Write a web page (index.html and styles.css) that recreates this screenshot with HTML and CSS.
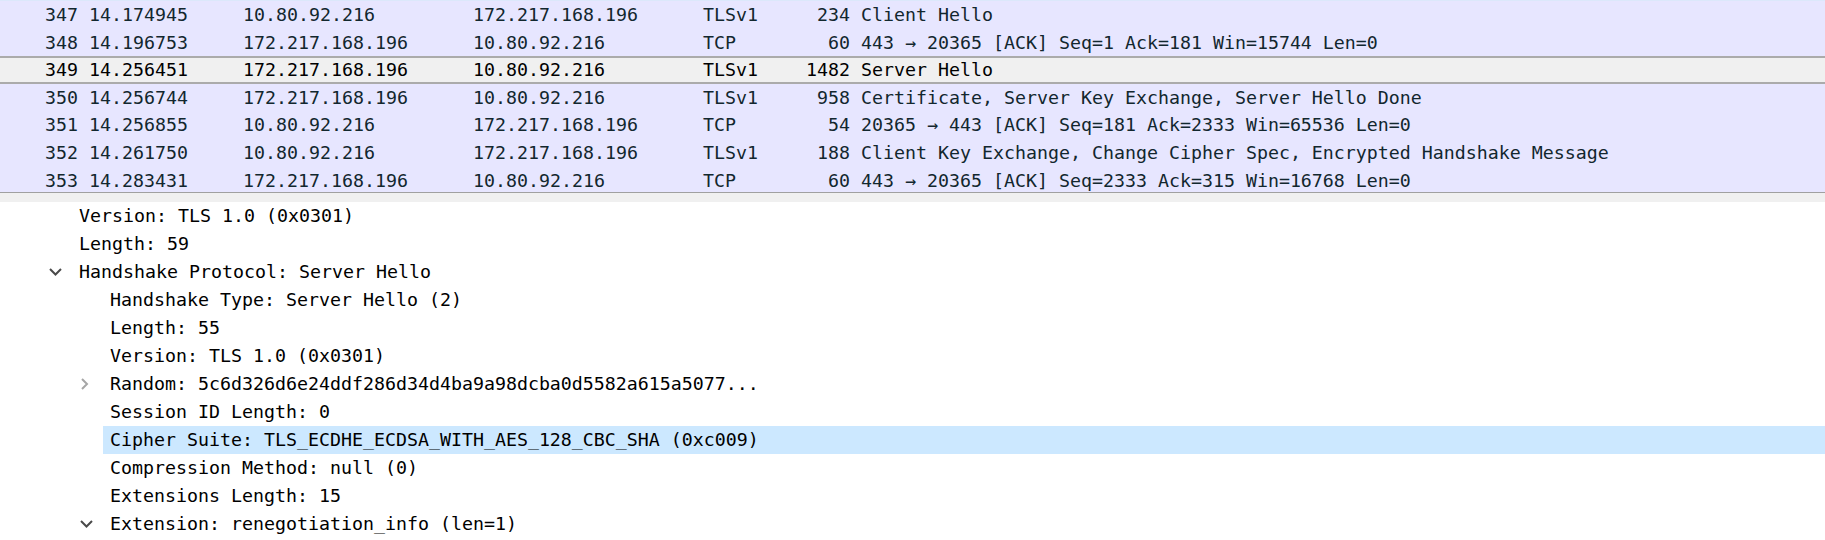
FILE: index.html
```html
<!DOCTYPE html>
<html>
<head>
<meta charset="utf-8">
<link rel="stylesheet" href="styles.css">
</head>
<body>
<div class="packets">
  <div class="prow"><span class="c-no">347</span><span class="c-time">14.174945</span><span class="c-src">10.80.92.216</span><span class="c-dst">172.217.168.196</span><span class="c-proto">TLSv1</span><span class="c-len">234</span><span class="c-info">Client Hello</span></div>
  <div class="prow"><span class="c-no">348</span><span class="c-time">14.196753</span><span class="c-src">172.217.168.196</span><span class="c-dst">10.80.92.216</span><span class="c-proto">TCP</span><span class="c-len">60</span><span class="c-info">443 → 20365 [ACK] Seq=1 Ack=181 Win=15744 Len=0</span></div>
  <div class="prow selected"><span class="c-no">349</span><span class="c-time">14.256451</span><span class="c-src">172.217.168.196</span><span class="c-dst">10.80.92.216</span><span class="c-proto">TLSv1</span><span class="c-len">1482</span><span class="c-info">Server Hello</span></div>
  <div class="prow"><span class="c-no">350</span><span class="c-time">14.256744</span><span class="c-src">172.217.168.196</span><span class="c-dst">10.80.92.216</span><span class="c-proto">TLSv1</span><span class="c-len">958</span><span class="c-info">Certificate, Server Key Exchange, Server Hello Done</span></div>
  <div class="prow"><span class="c-no">351</span><span class="c-time">14.256855</span><span class="c-src">10.80.92.216</span><span class="c-dst">172.217.168.196</span><span class="c-proto">TCP</span><span class="c-len">54</span><span class="c-info">20365 → 443 [ACK] Seq=181 Ack=2333 Win=65536 Len=0</span></div>
  <div class="prow"><span class="c-no">352</span><span class="c-time">14.261750</span><span class="c-src">10.80.92.216</span><span class="c-dst">172.217.168.196</span><span class="c-proto">TLSv1</span><span class="c-len">188</span><span class="c-info">Client Key Exchange, Change Cipher Spec, Encrypted Handshake Message</span></div>
  <div class="prow"><span class="c-no">353</span><span class="c-time">14.283431</span><span class="c-src">172.217.168.196</span><span class="c-dst">10.80.92.216</span><span class="c-proto">TCP</span><span class="c-len">60</span><span class="c-info">443 → 20365 [ACK] Seq=2333 Ack=315 Win=16768 Len=0</span></div>
</div>
<div class="splitter"></div>
<div class="details">
  <div class="trow lvl1"><span class="branch"></span><span class="label">Version: TLS 1.0 (0x0301)</span></div>
  <div class="trow lvl1"><span class="branch"></span><span class="label">Length: 59</span></div>
  <div class="trow lvl1"><span class="branch"><svg class="chev-open" width="13" height="8" viewBox="0 0 13 8"><polyline points="1,1 6.5,6.5 12,1"/></svg></span><span class="label">Handshake Protocol: Server Hello</span></div>
  <div class="trow lvl2"><span class="branch"></span><span class="label">Handshake Type: Server Hello (2)</span></div>
  <div class="trow lvl2"><span class="branch"></span><span class="label">Length: 55</span></div>
  <div class="trow lvl2"><span class="branch"></span><span class="label">Version: TLS 1.0 (0x0301)</span></div>
  <div class="trow lvl2"><span class="branch"><svg class="chev-closed" width="9" height="12" viewBox="0 0 9 12"><polyline points="2,1 7,6 2,11"/></svg></span><span class="label">Random: 5c6d326d6e24ddf286d34d4ba9a98dcba0d5582a615a5077...</span></div>
  <div class="trow lvl2"><span class="branch"></span><span class="label">Session ID Length: 0</span></div>
  <div class="trow lvl2"><span class="branch"></span><span class="label hl">Cipher Suite: TLS_ECDHE_ECDSA_WITH_AES_128_CBC_SHA (0xc009)</span></div>
  <div class="trow lvl2"><span class="branch"></span><span class="label">Compression Method: null (0)</span></div>
  <div class="trow lvl2"><span class="branch"></span><span class="label">Extensions Length: 15</span></div>
  <div class="trow lvl2"><span class="branch"><svg class="chev-open" width="13" height="8" viewBox="0 0 13 8"><polyline points="1,1 6.5,6.5 12,1"/></svg></span><span class="label">Extension: renegotiation_info (len=1)</span></div>
</div>
</body>
</html>
```
FILE: styles.css
```css
html, body {
  margin: 0;
  padding: 0;
  background: #ffffff;
}
body {
  font-family: "DejaVu Sans Mono", "Liberation Mono", monospace;
  font-size: 18.27px;
  width: 1825px;
  height: 540px;
  overflow: hidden;
}
.packets {
  height: 192px;
  overflow: hidden;
  background: #e7e6ff;
  border-top: 1px solid #dce8fb;
  border-bottom: 1px solid #a0a0a0;
  box-sizing: border-box;
  height: 193px;
}
.prow {
  display: grid;
  grid-template-columns: 89px 154px 230px 230px 92px 66px 1fr;
  height: 27.6px;
  line-height: 27.6px;
  color: #12272e;
  background: #e7e6ff;
  white-space: nowrap;
}
.prow.selected {
  background: #f0f0f0;
  color: #000000;
  box-shadow: inset 0 2px 0 #ababab, inset 0 -2px 0 #ababab;
}
.c-no {
  text-align: right;
  padding-right: 11px;
}
.c-len {
  text-align: right;
  padding-right: 11px;
}
.splitter {
  height: 9px;
  background: #f0f0f0;
}
.details {
  padding-top: 0px;
  color: #000000;
}
.trow {
  display: flex;
  align-items: stretch;
  height: 28px;
  line-height: 28px;
  white-space: nowrap;
}
.trow.lvl1 { padding-left: 48px; }
.trow.lvl2 { padding-left: 79px; }
.branch {
  flex: none;
  width: 24px;
  display: flex;
  align-items: center;
  justify-content: flex-start;
}
.branch svg { display: block; margin-left: 1px; }
.chev-open polyline {
  fill: none;
  stroke: #4a4a4a;
  stroke-width: 2;
}
.chev-closed polyline {
  fill: none;
  stroke: #a6a6a6;
  stroke-width: 2;
}
.label {
  padding-left: 7px;
}
.label.hl {
  flex: 1;
  background: #cce8ff;
}
```
